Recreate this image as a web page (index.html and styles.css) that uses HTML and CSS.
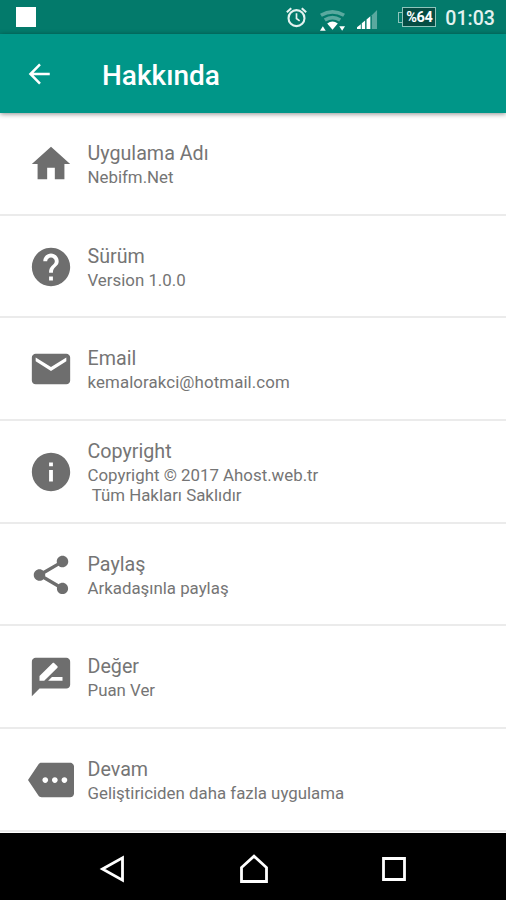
FILE: index.html
```html
<!DOCTYPE html>
<html lang="tr">
<head>
<meta charset="utf-8">
<title>Hakkında</title>
<link rel="stylesheet" href="styles.css">
</head>
<body>
<div class="screen">
  <div class="status">
    <span class="notice"></span>
    <svg class="alarm" viewBox="0 0 20 20"><g fill="none" stroke="#e3f2ef" stroke-width="2"><circle cx="10" cy="10.600" r="7.600"/><path d="M10 6v5l3 2.200" stroke-width="1.600"/><path d="M.8 5 5 1.200M19.200 5 15 1.200"/></g></svg>
    <svg class="wifi" viewBox="0 0 28 24"><g fill="none" stroke="#5aa99f" stroke-width="3.800"><path d="M2 6q12-7 24 0"/><path d="M6 11q8-5 16 0"/></g><path d="M8.500 14.500q5.500-4 11 0L14 21z" fill="#fff"/><path d="M1 22l3-4.500 3 4.500zM21 17.500h6L24 22z" fill="#fff"/></svg>
    <svg class="signal" viewBox="0 0 22 21"><path d="M0 20.500V18.500l4-3v5zM5 20.500v-6l3.500-3v9zM10 20.500v-10l4-3.500v13.500z" fill="#fff"/><path d="M15.500 20.500V6L21 .5v20z" fill="#5aa99f"/></svg>
    <div class="battery"><span>%64</span></div>
    <span class="clock">01:03</span>
  </div>
  <header class="bar">
    <svg class="back" viewBox="0 0 24 24"><path d="M21 12H3.500M12 3.200 3.200 12l8.800 8.800" fill="none" stroke="#fff" stroke-width="2.300"/></svg>
    <h1>Hakkında</h1>
  </header>
  <main class="list">
    <section class="row">
      <svg class="icon" viewBox="0 0 24 24"><path d="M10 20v-6h4v6h5v-8h3L12 3 2 12h3v8z"/></svg>
      <div class="text"><h2>Uygulama Adı</h2><p>Nebifm.Net</p></div>
    </section>
    <section class="row">
      <svg class="icon" viewBox="0 0 24 24"><path d="M12 2C6.480 2 2 6.480 2 12s4.480 10 10 10 10-4.480 10-10S17.520 2 12 2zm1 17h-2v-2h2v2zm2.070-7.750l-.9.920C13.450 12.900 13 13.500 13 15h-2v-.5c0-1.100.45-2.100 1.170-2.830l1.240-1.260c.37-.36.59-.86.59-1.410 0-1.100-.9-2-2-2s-2 .9-2 2H8c0-2.210 1.790-4 4-4s4 1.790 4 4c0 .88-.36 1.680-.93 2.250z"/></svg>
      <div class="text"><h2>Sürüm</h2><p>Version 1.0.0</p></div>
    </section>
    <section class="row">
      <svg class="icon" viewBox="0 0 24 24"><path d="M20 4H4c-1.100 0-1.990.9-1.990 2L2 18c0 1.100.9 2 2 2h16c1.100 0 2-.9 2-2V6c0-1.100-.9-2-2-2zm0 4l-8 5-8-5V6l8 5 8-5v2z"/></svg>
      <div class="text"><h2>Email</h2><p class="mail">kemalorakci@hotmail.com</p></div>
    </section>
    <section class="row">
      <svg class="icon" viewBox="0 0 24 24"><path d="M12 2C6.480 2 2 6.480 2 12s4.480 10 10 10 10-4.480 10-10S17.520 2 12 2zm1 15h-2v-6h2v6zm0-8h-2V7h2v2z"/></svg>
      <div class="text"><h2>Copyright</h2><p>Copyright © 2017 Ahost.web.tr<br>&nbsp;Tüm Hakları Saklıdır</p></div>
    </section>
    <section class="row">
      <svg class="icon" viewBox="0 0 24 24"><path d="M18 16.080c-.76 0-1.440.3-1.960.77L8.910 12.700c.05-.23.09-.46.09-.7s-.04-.47-.09-.7l7.050-4.110c.54.5 1.250.81 2.040.81 1.660 0 3-1.340 3-3s-1.340-3-3-3-3 1.340-3 3c0 .24.040.47.090.7L8.040 9.810C7.500 9.310 6.790 9 6 9c-1.660 0-3 1.340-3 3s1.340 3 3 3c.79 0 1.500-.31 2.040-.81l7.120 4.160c-.05.21-.08.43-.08.65 0 1.610 1.310 2.920 2.920 2.920s2.920-1.310 2.920-2.920-1.310-2.920-2.920-2.920z"/></svg>
      <div class="text"><h2>Paylaş</h2><p>Arkadaşınla paylaş</p></div>
    </section>
    <section class="row">
      <svg class="icon" viewBox="0 0 24 24"><path d="M20 2H4c-1.100 0-1.990.9-1.990 2L2 22l4-4h14c1.100 0 2-.9 2-2V4c0-1.100-.9-2-2-2zM6 14v-2.470l6.880-6.880c.2-.2.51-.2.71 0l1.770 1.770c.2.2.2.51 0 .71L8.470 14H6zm12 0h-7.500l2-2H18v2z"/></svg>
      <div class="text"><h2>Değer</h2><p>Puan Ver</p></div>
    </section>
    <section class="row">
      <svg class="icon" viewBox="0 0 24 24"><path d="M22 3H7c-.69 0-1.230.35-1.590.88L0 12l5.410 8.110c.36.53.97.89 1.660.89H22c1.100 0 2-.9 2-2V5c0-1.100-.9-2-2-2zM9 13.500c-.83 0-1.500-.67-1.500-1.500s.67-1.500 1.500-1.500 1.500.67 1.500 1.500-.67 1.500-1.500 1.500zm5 0c-.83 0-1.500-.67-1.500-1.500s.67-1.500 1.500-1.500 1.500.67 1.500 1.500-.67 1.500-1.500 1.500zm5 0c-.83 0-1.500-.67-1.500-1.500s.67-1.500 1.500-1.500 1.500.67 1.500 1.500-.67 1.500-1.500 1.500z"/></svg>
      <div class="text"><h2>Devam</h2><p>Geliştiriciden daha fazla uygulama</p></div>
    </section>
  </main>
  <nav class="nav">
    <svg viewBox="0 0 32 32"><path d="M4.500 16 24.500 4.800v22.400z"/></svg>
    <svg viewBox="0 0 32 32"><path d="M3.500 28.500V14.500L16 3.200l12.500 11.300v14z"/></svg>
    <svg viewBox="0 0 32 32"><path d="M5.500 5.500h21v21h-21z"/></svg>
  </nav>
</div>
</body>
</html>
```
FILE: styles.css
```css
* { box-sizing: border-box; }
body { margin: 0; font-family: Roboto, "Liberation Sans", sans-serif; }
h1, h2, p { margin: 0; }
svg { display: block; flex: none; }
.screen { width: 506px; height: 900px; display: flex; flex-direction: column; background: #fff; overflow: hidden; }
.status { height: 34px; flex: none; display: flex; align-items: center; padding: 0 11px 0 16px; background: #037a6b; color: #e3f2ef; }
.notice { width: 20px; height: 20px; background: #fff; margin-right: auto; }
.alarm { width: 21px; height: 21px; margin: 1px 12px 0 0; }
.wifi { width: 27px; height: 24px; margin: 7px 11px 0 0; }
.signal { width: 21px; height: 21px; margin: 4px 24px 0 0; }
.battery { width: 34px; height: 20px; border: 1.500px solid #8fc5bc; background: #064d44; position: relative; display: flex; align-items: center; justify-content: center; margin-right: 9px; font-size: 14.500px; font-weight: 700; color: #fff; letter-spacing: -0.500px; }
.battery::before { content: ""; position: absolute; left: -5px; top: 4px; width: 4px; height: 9px; border: 1px solid #8fc5bc; border-right: 0; }
.clock { font-size: 19.600px; font-weight: 500; line-height: 34px; padding-top: 3px; }
.bar { height: 79px; flex: none; display: flex; align-items: center; padding-left: 27px; background: #009688; color: #fff; box-shadow: 0 1px 5px rgba(0, 0, 0, .45); position: relative; z-index: 1; }
.back { width: 26px; height: 26px; margin-right: 49px; }
.bar h1 { font-size: 28px; font-weight: 500; line-height: 32px; padding-top: 4px; }
.list { height: 720px; flex: none; display: grid; grid-template-rows: repeat(7, 102.700px); }
.row { display: flex; align-items: center; padding-left: 28px; border-bottom: 2px solid #ebebeb; }
.icon { width: 46px; height: 46px; margin: 1px 13.500px 0 0; fill: #6e6e6e; }
.text { padding-top: 2px; }
.row h2 { font-size: 19.700px; font-weight: 400; line-height: 24px; color: #757575; }
.row p { font-size: 16.850px; line-height: 20px; color: #757575; padding-top: 1px; }
.row .mail { letter-spacing: .1px; }
.nav { flex: 1; display: flex; align-items: center; justify-content: space-between; padding: 4px 96px 0 98px; background: #000; }
.nav svg { width: 32px; height: 32px; fill: none; stroke: #fff; stroke-width: 2.800; }
```
